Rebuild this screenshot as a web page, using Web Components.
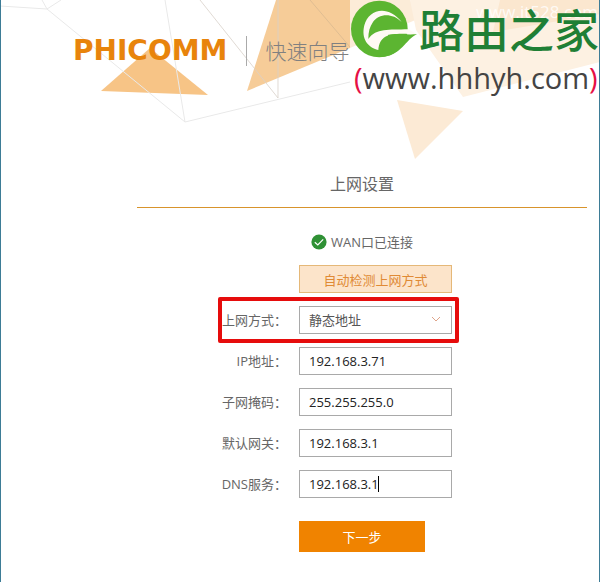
<!DOCTYPE html>
<html lang="zh-CN">
<head>
<meta charset="utf-8">
<title>快速向导</title>
<style>
    body{
        margin: 0;
        background: #fff;
        color: #666;
        font-family: "Open Sans", "Noto Sans CJK SC", sans-serif;
        font-size: 13px;
    }
</style>
</head>
<body>
<wizard-page>
    <wizard-header slot="header" brand="PHICOMM">快速向导</wizard-header>
    <wizard-section heading="上网设置">
        <wan-status>WAN口已连接</wan-status>
        <detect-button>自动检测上网方式</detect-button>
        <select-row label="上网方式：" value="静态地址"></select-row>
        <text-row label="IP地址：" value="192.168.3.71"></text-row>
        <text-row label="子网掩码：" value="255.255.255.0"></text-row>
        <text-row label="默认网关：" value="192.168.3.1"></text-row>
        <text-row label="DNS服务：" value="192.168.3.1" caret></text-row>
        <next-button>下一步</next-button>
    </wizard-section>
    <site-stamp slot="stamp" site="路由之家" url="www.hhhyh.com"></site-stamp>
</wizard-page>

<script>
// columns shared by every row of the form
const rowStyles = `
    :host{
        display: grid;
        grid-template-columns: calc(100% / 3) 153px;
        column-gap: 12px;
        align-items: center;
        position: relative;
    }
    label{
        text-align: right;
        line-height: 26px;
        white-space: nowrap;
    }
    input, select{
        box-sizing: border-box;
        width: 100%;
        height: 28px;
        margin: 0;
        padding: 0 9px;
        border: 1px solid #a9a9a9;
        border-radius: 0;
        background: #fff;
        font: inherit;
        outline: none;
    }
`;

function define(name, html, setup){
    const template = document.createElement('template');
    template.innerHTML = html;
    window.customElements.define(name, class extends HTMLElement{
        constructor(){
            super();
            this.attachShadow({ mode: 'open' });
            this.shadowRoot.appendChild(template.content.cloneNode(true));
        }

        connectedCallback(){
            if (setup) setup(this, this.shadowRoot);
        }
    });
}

define('wizard-page', `
<style>
    :host{
        display: block;
        position: relative;
        box-sizing: border-box;
        min-height: 100vh;
        border-left: 1px solid #3d7c96;
        border-right: 1px solid #3d7c96;
        overflow: hidden;
    }
    .art{
        position: absolute;
        top: 0;
        left: -1px;
    }
    .content{
        position: relative;
    }
    main{
        padding: 0 12px 24px 136px;
    }
</style>
<svg class="art" width="600" height="170" viewBox="0 0 600 170" aria-hidden="true">
    <path d="M150 48L101 91L208 95Z" fill="#f7c486"/>
    <path d="M276 0L247 91L350 48L420 18L410 0Z" fill="#f6cc98"/>
    <path d="M397 100L463 111L415 159Z" fill="#fcead5"/>
    <path d="M410 0L416 30L463 97L600 62V0Z" fill="#f9d9b3"/>
    <path d="M500 0L493 32L600 14V0Z" fill="#f3bf80"/>
    <g fill="none" stroke="#e9e9e9">
        <path d="M0 6L47 9L42 0M47 9L61 0M47 9L185 122L350 82M165 0L185 122"/>
        <path d="M200 0L278 98M278 0V98" stroke="#d8d1c9" stroke-opacity=".8"/>
        <path d="M310 0L350 47" stroke="#dfbd92"/>
    </g>
</svg>
<div class="content">
    <slot name="header"></slot>
    <main><slot></slot></main>
</div>
<slot name="stamp"></slot>
`);

define('wizard-header', `
<style>
    :host{
        display: flex;
        align-items: center;
        height: 102px;
        padding-left: 72px;
    }
    .brand{
        color: #e8840c;
        font: bold 28px/32px "DejaVu Sans", sans-serif;
    }
    h1{
        margin: 0 0 0 19px;
        padding-left: 18px;
        border-left: 1px solid #aaa;
        color: #808080;
        font-size: 21px;
        font-weight: 300;
        line-height: 30px;
    }
</style>
<span class="brand"></span>
<h1><slot></slot></h1>
`, (el, root) => {
    root.querySelector('.brand').textContent = el.getAttribute('brand');
});

define('wizard-section', `
<style>
    :host{
        display: block;
    }
    h2{
        margin: 0;
        padding: 70px 0 11px;
        border-bottom: 1px solid #d8942c;
        font-size: 16px;
        font-weight: 400;
        line-height: 24px;
        text-align: center;
    }
    .rows{
        display: flex;
        flex-direction: column;
        gap: 13px;
        padding-top: 24px;
    }
</style>
<h2></h2>
<div class="rows"><slot></slot></div>
`, (el, root) => {
    root.querySelector('h2').textContent = el.getAttribute('heading');
});

define('wan-status', `
<style>
    :host{
        display: flex;
        align-items: center;
        justify-content: center;
        gap: 4px;
        line-height: 20px;
    }
</style>
<svg width="16" height="16" viewBox="0 0 16 16" aria-hidden="true">
    <circle cx="8" cy="8" r="7.6" fill="#2f9135"/>
    <path d="M3.8 8.2L6.8 10.9L12.2 5.4" fill="none" stroke="#fff" stroke-width="1.2"/>
</svg>
<span><slot></slot></span>
`);

define('detect-button', `
<style>
    ${rowStyles}
    button{
        grid-column: 2;
        height: 28px;
        padding: 0;
        border: 1px solid #e5b878;
        background: #fce4ca;
        color: #e08a35;
        font: inherit;
    }
</style>
<button type="button"><slot></slot></button>
`);

define('next-button', `
<style>
    ${rowStyles}
    :host{
        margin-top: 10px;
    }
    button{
        grid-column: 2;
        width: 126px;
        height: 31px;
        padding: 0;
        border: 0;
        background: #f08300;
        color: #fff;
        font: inherit;
    }
</style>
<button type="submit"><slot></slot></button>
`);

define('text-row', `
<style>
    ${rowStyles}
    input{
        color: #222;
    }
    .field{
        position: relative;
    }
    .caret{
        display: none;
        position: absolute;
        top: 6px;
        left: 9px;
        height: 16px;
        border-right: 1px solid #000;
    }
    :host([caret]) .caret{
        display: block;
    }
</style>
<label for="field"></label>
<div class="field">
    <input id="field" type="text">
    <i class="caret"></i>
</div>
`, (el, root) => {
    const input = root.querySelector('input');
    root.querySelector('label').textContent = el.getAttribute('label');
    input.value = el.getAttribute('value');
    if (el.hasAttribute('caret')){
        // the caret stands after the last character
        const ctx = document.createElement('canvas').getContext('2d');
        ctx.font = '13px "Open Sans"';
        root.querySelector('.caret').style.width = Math.round(ctx.measureText(input.value).width) + 'px';
    }
});

define('select-row', `
<style>
    ${rowStyles}
    select{
        appearance: none;
        color: #555;
    }
    .field{
        position: relative;
    }
    .chevron{
        position: absolute;
        top: 10px;
        right: 11px;
        pointer-events: none;
    }
    .mark{
        position: absolute;
        top: -9px;
        bottom: -9px;
        left: calc(100% / 3 - 69px);
        width: 233px;
        border: 4px solid #e60c0c;
        border-radius: 2px;
        pointer-events: none;
    }
</style>
<label for="field"></label>
<div class="field">
    <select id="field"><option></option></select>
    <svg class="chevron" width="10" height="7" viewBox="0 0 10 7" aria-hidden="true">
        <path d="M1 1L5 5L9 1" fill="none" stroke="#dfa48a"/>
    </svg>
</div>
<div class="mark"></div>
`, (el, root) => {
    root.querySelector('label').textContent = el.getAttribute('label');
    root.querySelector('option').textContent = el.getAttribute('value');
});

define('site-stamp', `
<style>
    :host{
        position: absolute;
        top: 0;
        right: -1px;
        width: 250px;
        height: 100px;
        background: rgba(255, 255, 255, .62);
    }
    .row{
        display: flex;
        align-items: flex-start;
        gap: 2px;
    }
    .faint{
        position: absolute;
        top: 2px;
        right: 2px;
        color: rgba(255, 255, 255, .8);
        font-size: 17px;
        line-height: 20px;
    }
    .leaf{
        flex: none;
        margin-left: 1px;
    }
    .name{
        position: relative;
        color: #1f7f35;
        font: 500 45px/58px "Noto Sans CJK SC", sans-serif;
        white-space: nowrap;
    }
    .url{
        padding-left: 4px;
        color: #444;
        font: 29px/40px "Open Sans", sans-serif;
        white-space: nowrap;
    }
    .url b{
        color: #e60f45;
        font-weight: 400;
    }
</style>
<span class="faint">www.it528.com</span>
<div class="row">
    <svg class="leaf" width="66" height="58" viewBox="18 0 198 174" aria-hidden="true">
        <circle cx="103" cy="87" r="85" fill="#5cb531"/>
        <path d="M100 150C68 143 48 116 58 76C70 28 128 12 170 66C140 36 100 42 84 66C74 80 70 96 70 117C94 84 130 90 190 88L216 103C150 99 104 96 100 150Z" fill="#fffaf4"/>
        <path d="M130 104C150 102 190 104 216 103C182 116 170 171 103 171Z" fill="#5cb531"/>
    </svg>
    <span class="name"></span>
</div>
<div class="url"><b>(</b><span></span><b>)</b></div>
`, (el, root) => {
    root.querySelector('.name').textContent = el.getAttribute('site');
    root.querySelector('.url span').textContent = el.getAttribute('url');
});
</script>
</body>
</html>
